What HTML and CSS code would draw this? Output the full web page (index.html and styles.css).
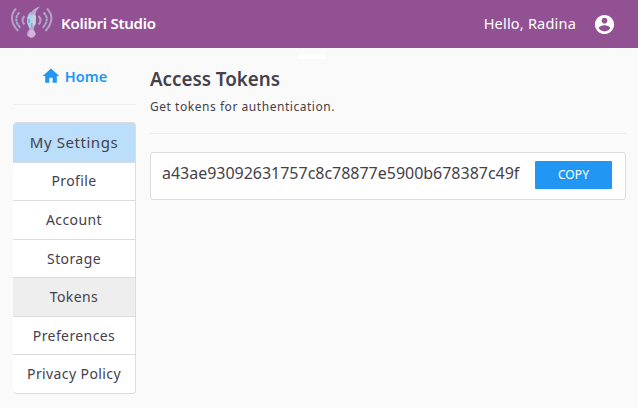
FILE: index.html
```html
<!DOCTYPE html>
<html lang="en">
<head>
<meta charset="utf-8">
<title>Kolibri Studio</title>
<link rel="stylesheet" href="styles.css">
</head>
<body>
<header class="topbar">
  <svg class="logo" viewBox="0 0 44 36" aria-hidden="true">
    <g fill="none" stroke="#b3a0c6" stroke-width="2">
      <path d="M6 5.500Q-3 15.500 8 28M37 5.500Q46.500 15.500 35.500 28"/>
      <path d="M9.500 9.500Q2.500 16 10.500 25M33.500 9.500Q40.500 16 32.500 25" stroke="#a5add0" stroke-dasharray="3 .5"/>
      <path d="M14.500 13Q10.500 17 14.500 21.500M28.500 13Q32.500 17 28.500 21.500"/>
    </g>
    <path fill="#b7adcf" d="M30.500 3.500Q26.500 6 25.500 11L26 20L23.500 26L26 31L24 34L20.500 35L17 32.500L17.500 29L19.500 26L17 20L17.500 13.500Q18.500 9 21.500 9Q24.500 4.500 30.500 3.500Z"/>
    <path fill="#a9d3ea" d="M17.500 14L21 11L23 14L22.500 23L19.500 25L17 19Z"/>
    <path fill="#c8d5dc" d="M22.500 11L26 13L25.500 21L22.500 24Z"/>
    <path fill="#79addb" d="M18 16h2v4h-2zM21 20h1.500v4H21z"/>
    <path fill="#d8b2dd" d="M20 27h3.500l2 4-3 3.500-4.500-2Z"/>
  </svg>
  <span class="brand">Kolibri Studio</span>
  <span class="greeting">Hello, Radina</span>
  <svg class="avatar" viewBox="0 0 24 24" aria-hidden="true"><path fill="#fff" d="M12 2C6.480 2 2 6.480 2 12s4.480 10 10 10 10-4.480 10-10S17.520 2 12 2zm0 3c1.660 0 3 1.340 3 3s-1.340 3-3 3-3-1.340-3-3 1.340-3 3-3zm0 14.200c-2.500 0-4.710-1.280-6-3.220.030-1.990 4-3.080 6-3.080 1.990 0 5.970 1.090 6 3.080-1.290 1.940-3.500 3.220-6 3.220z"/></svg>
</header>
<div class="handle"></div>
<div class="layout">
  <aside class="sidebar">
    <a class="home"><svg class="home-icon" viewBox="0 0 24 24" aria-hidden="true"><path fill="#2196f3" d="M10 20v-6h4v6h5v-8h3L12 3 2 12h3v8z"/></svg><span>Home</span></a>
    <nav class="menu">
      <div class="menu-title">My Settings</div>
      <a class="item">Profile</a>
      <a class="item tall">Account</a>
      <a class="item">Storage</a>
      <a class="item tall active">Tokens</a>
      <a class="item">Preferences</a>
      <a class="item tall">Privacy Policy</a>
    </nav>
  </aside>
  <main class="content">
    <h1 class="title">Access Tokens</h1>
    <p class="subtitle">Get tokens for authentication.</p>
    <section class="token-card">
      <span class="token">a43ae93092631757c8c78877e5900b678387c49f</span>
      <button class="copy">COPY</button>
    </section>
  </main>
</div>
</body>
</html>
```
FILE: styles.css
```css
* { box-sizing: border-box; }
body {
  margin: 0;
  height: 408px;
  overflow: hidden;
  background: #fafafa;
  color: #45414c;
  font-family: "Noto Sans", sans-serif;
}
.topbar {
  display: flex;
  align-items: center;
  height: 48px;
  padding: 0 22px 0 10px;
  background: #925193;
  color: #fff;
}
.logo { width: 44px; height: 36px; margin: -6px 7px 0 0; }
.brand { font-size: 15px; font-weight: 600; line-height: 20px; margin-top: -2px; letter-spacing: -0.26px; }
.greeting { margin: -3px 17px 0 auto; font-size: 14.500px; line-height: 20px; letter-spacing: 0.2px; }
.avatar { width: 23px; height: 23px; }
.handle { position: absolute; left: 298px; top: 54px; width: 27px; height: 5px; background: #fff; }
.layout { display: flex; gap: 14px; padding: 0 12px 0 13px; }
.sidebar { width: 123px; }
.home {
  display: flex;
  align-items: center;
  justify-content: center;
  gap: 4px;
  height: 57px;
  padding-right: 1px;
  border-bottom: 1px solid #eee;
  color: #2196f3;
  font-size: 14.500px;
  font-weight: 600;
}
.home span { margin-top: -1px; }
.home-icon { width: 20px; height: 20px; }
.menu {
  margin-top: 17px;
  border: 1px solid #dcdcdc;
  border-left: 0;
  border-radius: 4px;
  overflow: hidden;
  background: #fff;
  text-align: center;
}
.menu-title {
  height: 40px;
  border-bottom: 1px solid #d7dce0;
  background: #bbdefb;
  font-size: 15px;
  line-height: 39px;
  letter-spacing: 0.55px;
}
.item {
  display: block;
  height: 38px;
  border-bottom: 1px solid #dcdcdc;
  font-size: 14px;
  line-height: 36px;
  letter-spacing: 0.4px;
}
.tall { height: 39px; line-height: 38px; }
.item:nth-child(n+4) { line-height: 38px; }
.item:last-child { height: 38px; border-bottom: 0; }
.active { background: #eee; }
.content { flex: 1; }
.title { margin: 18px 0 0; font-size: 18.800px; font-weight: 600; line-height: 26px; }
.subtitle {
  height: 42px;
  margin: 0;
  padding-top: 6px;
  border-bottom: 1px solid #eee;
  font-size: 12px;
  line-height: 17px;
  letter-spacing: 0.54px;
}
.token-card {
  display: flex;
  align-items: center;
  justify-content: space-between;
  width: 476px;
  height: 48px;
  margin: 18px 0 0 0;
  padding: 0 13px 0 11px;
  border: 1px solid #dcdcdc;
  border-radius: 3px;
  background: #fff;
}
.token { font-size: 16px; line-height: 20px; margin-top: -6px; letter-spacing: -0.02px; }
.copy {
  width: 77px;
  height: 28px;
  margin-top: -2px;
  padding: 0;
  border: 0;
  border-radius: 1px;
  background: #2196f3;
  color: #fff;
  font: 12px/28px "Noto Sans", sans-serif;
  letter-spacing: 0.1px;
}
```
